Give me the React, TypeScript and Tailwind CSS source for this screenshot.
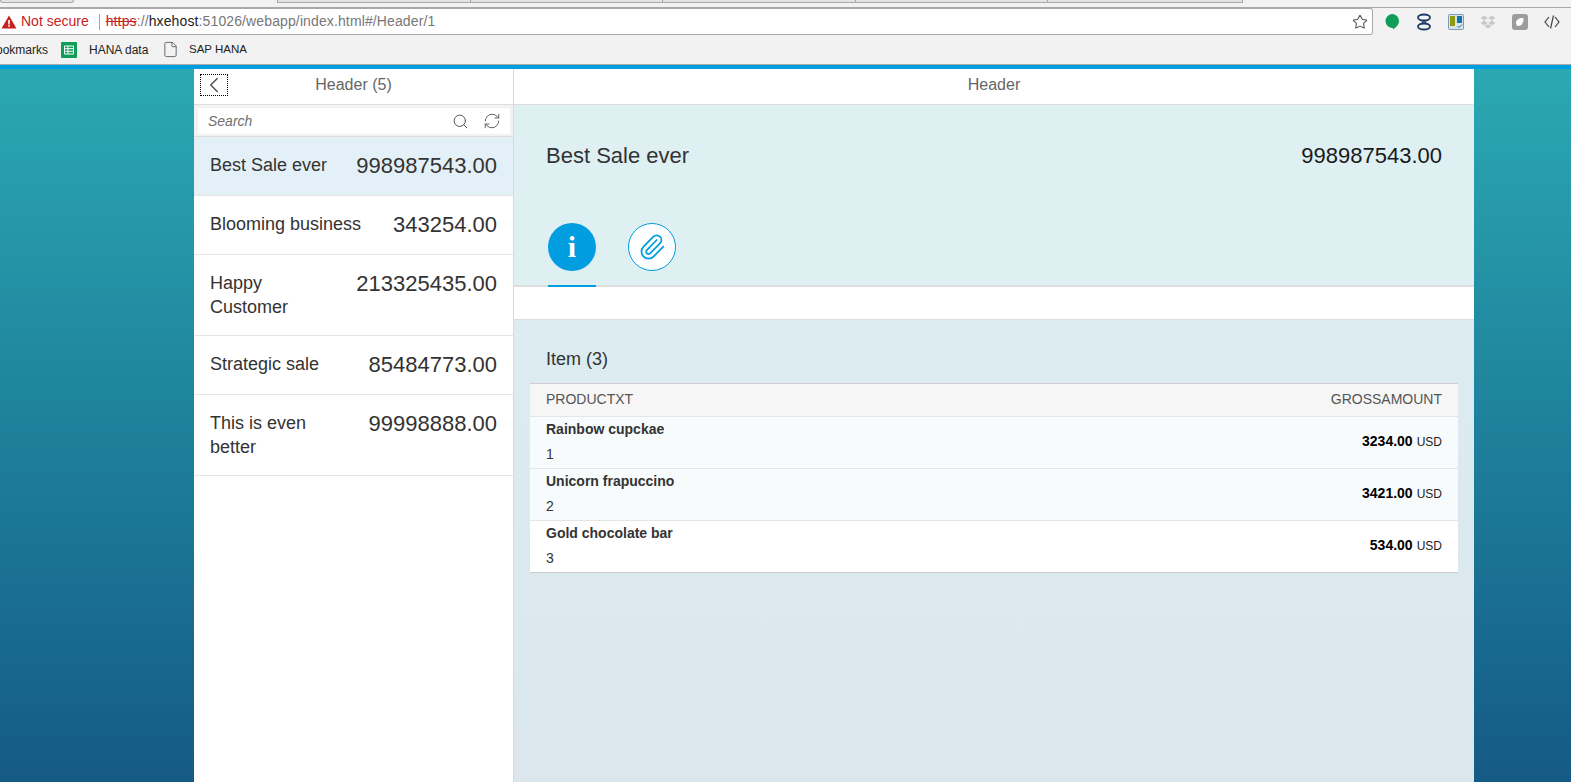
import { ChevronLeft, Search, RefreshCw, Star, Paperclip, File } from 'lucide-react'

const leads = [
  { name: 'Best Sale ever', amount: '998987543.00', h: 'h-[59px]', w: 'max-w-[160px]', selected: true },
  { name: 'Blooming business', amount: '343254.00', h: 'h-[59px]', w: 'max-w-[160px]' },
  { name: 'Happy Customer', amount: '213325435.00', h: 'h-[81px]', w: 'max-w-[120px]' },
  { name: 'Strategic sale', amount: '85484773.00', h: 'h-[59px]', w: 'max-w-[160px]' },
  { name: 'This is even better', amount: '99998888.00', h: 'h-[81px]', w: 'max-w-[120px]' },
]

const items = [
  { name: 'Rainbow cupckae', id: '1', amount: '3234.00', row: 'bg-[#f7fbfc] border-[#e5e5e5]' },
  { name: 'Unicorn frapuccino', id: '2', amount: '3421.00', row: 'bg-[#f7fbfc] border-[#e5e5e5]' },
  { name: 'Gold chocolate bar', id: '3', amount: '534.00', row: 'bg-white border-[#cccccc]' },
]

function ChromeTabs() {
  return (
    <div className="flex h-[8px] border-b border-[#a8a8a8] bg-[#f2f2f2]">
      <div className="h-[3px] w-[74px] rounded-b-sm border border-t-0 border-[#a8a8a8] bg-[#e4e4e4]" />
      <div className="ml-[203px] h-[3px] w-[194px] border border-t-0 border-[#a8a8a8] bg-[#e4e4e4]" />
      <div className="h-[3px] w-[192px] border border-l-0 border-t-0 border-[#a8a8a8] bg-[#e4e4e4]" />
      <div className="h-[3px] w-[193px] border border-l-0 border-t-0 border-[#a8a8a8] bg-[#e4e4e4]" />
      <div className="h-[3px] w-[192px] border border-l-0 border-t-0 border-[#a8a8a8] bg-[#e4e4e4]" />
      <div className="h-[3px] w-[195px] border border-l-0 border-t-0 border-[#a8a8a8] bg-[#e4e4e4]" />
    </div>
  )
}

function Extensions() {
  return (
    <div className="ml-[11px] flex items-center gap-[16px]">
      <svg width="16" height="18" viewBox="0 0 16 18">
        <path d="M8 1a7 7 0 0 1 7 7c0 4-3.5 6.5-6 8.5V15A7 7 0 0 1 8 1z" fill="#0f9d58" />
      </svg>
      <svg width="16" height="18" viewBox="0 0 16 18" fill="none" stroke="#1d3c66" strokeWidth="1.8">
        <ellipse cx="8" cy="4.5" rx="6" ry="3" />
        <ellipse cx="8" cy="13.5" rx="6" ry="3" />
        <path d="M4 7l8 4M12 7l-8 4" strokeWidth="1" />
      </svg>
      <svg width="16" height="16" viewBox="0 0 16 16">
        <rect x="0.5" y="0.5" width="15" height="15" rx="1" fill="#dbe3ea" stroke="#7d99b3" />
        <rect x="2" y="2" width="5" height="10" fill="#8f9a0e" />
        <rect x="9" y="2" width="5" height="7" fill="#0f76ad" />
        <path d="M9.5 12l1.5 1.5 3-3" fill="none" stroke="#0f76ad" />
      </svg>
      <svg width="16" height="16" viewBox="0 0 16 16" fill="#c9c9c9">
        <path d="M4 1.5 8 4 4 6.5 0.5 4zM12 1.5 15.5 4 12 6.5 8 4zM4 6.5 8 9l-4 2.5L0.5 9zM12 6.5 15.5 9 12 11.5 8 9zM4.5 12.2 8 10l3.5 2.2L8 14.5z" />
      </svg>
      <svg width="16" height="16" viewBox="0 0 16 16">
        <rect width="16" height="16" rx="3" fill="#9c9c9c" />
        <path d="M4 9c0-3 3-5 6-5 2 0 2 2 1 4-1 3-3 4-5 4-1 0-2-1-2-3z" fill="#fff" />
      </svg>
      <svg width="16" height="16" viewBox="0 0 16 16" fill="none" stroke="#444" strokeWidth="1.2">
        <path d="M5 3 1 8l4 5M11 3l4 5-4 5M9.5 1.5l-3 13" />
      </svg>
    </div>
  )
}

function BrowserBar() {
  return (
    <div className="bg-[#f2f2f2]">
      <ChromeTabs />
      <div className="flex h-[27px] items-center">
        <div className="flex h-[27px] w-[1373px] items-center rounded-r-[3px] border border-l-0 border-[#a9a9a9] bg-white">
          <svg width="16" height="14" viewBox="0 0 16 14" className="ml-px">
            <path d="M8 0.5 15.5 13.5H0.5z" fill="#c5221f" />
            <rect x="7.2" y="5" width="1.6" height="4.5" fill="#fff" />
            <rect x="7.2" y="10.2" width="1.6" height="1.6" fill="#fff" />
          </svg>
          <span className="ml-[4px] text-[14px] text-[#c5221f]">Not secure</span>
          <span className="ml-[10px] mr-[6px] h-[16px] w-px bg-[#a9a9a9]" />
          <span className="flex-1 text-[14px] tracking-[0.12px] text-[#777]">
            <span className="text-[#c5221f] line-through">https</span>
            <span>://</span>
            <span className="text-[#222]">hxehost</span>
            <span>:51026/webapp/index.html#/Header/1</span>
          </span>
          <Star size={16} className="mr-[4px] text-[#555]" strokeWidth={1.6} />
        </div>
        <Extensions />
      </div>
      <div className="flex h-[29px] items-center overflow-hidden text-[12px] text-[#222]">
        <span className="ml-[-12px] w-[73px] shrink-0">Bookmarks</span>
        <svg width="16" height="16" viewBox="0 0 16 16" className="mr-[12px]">
          <rect width="16" height="16" rx="1" fill="#0f9d58" />
          <path d="M3.5 4h9v8h-9zM3.5 6.7h9M3.5 9.3h9M7 4v8" fill="none" stroke="#fff" />
        </svg>
        <span className="w-[73px]">HANA data</span>
        <File size={17} strokeWidth={1.2} className="mr-[10px] text-[#555]" />
        <span className="text-[11.5px]">SAP HANA</span>
      </div>
      <div className="h-px bg-[#a9a9a9]" />
      <div className="h-[4px] bg-[#009de0]" />
    </div>
  )
}

function MasterList() {
  return (
    <div className="flex w-[320px] flex-col border-r border-[#d9d9d9] bg-white">
      <div className="relative flex h-[36px] items-center justify-center border-b border-[#dddddd] pb-[3px] text-[16px] text-[#666666]">
        <div className="absolute left-[6px] top-[5px] flex h-[22px] w-[28px] items-center justify-center border border-dotted border-black">
          <ChevronLeft size={26} strokeWidth={1.4} className="text-[#555]" />
        </div>
        Header (5)
      </div>
      <div className="border-b border-[#dddddd] bg-[#f2f2f2] pb-[2px] pl-[4px] pr-[3px] pt-[3px]">
        <div className="flex h-[26px] items-center bg-white pl-[10px] pr-[9px]">
          <span className="flex-1 text-[14px] italic text-[#707070]">Search</span>
          <Search size={17} strokeWidth={1.4} className="mr-[14px] text-[#555]" />
          <RefreshCw size={18} strokeWidth={1.2} className="text-[#555]" />
        </div>
      </div>
      {leads.map((lead) => (
        <div
          key={lead.name}
          className={`flex ${lead.h} shrink-0 items-start justify-between border-b border-[#e5e5e5] px-[16px] pt-[16px] ${lead.selected ? 'bg-[#e3f0f8]' : 'bg-white'}`}
        >
          <span className={`${lead.w} text-[18px] leading-[24px] text-[#333333]`}>{lead.name}</span>
          <span className="text-[22px] leading-[26px] text-[#333333]">{lead.amount}</span>
        </div>
      ))}
    </div>
  )
}

function DetailHeader() {
  return (
    <div className="relative bg-[#dff0f3]">
      <div className="flex items-center justify-between pl-[32px] pr-[32px] pt-[38px]">
        <span className="text-[22px] leading-[26px] text-[#333333]">Best Sale ever</span>
        <span className="text-[22px] leading-[26px] text-[#1a1a1a]">998987543.00</span>
      </div>
      <div className="mt-[54px] flex h-[62px] gap-[32px] pl-[34px]">
        <div className="flex h-[48px] w-[48px] items-center justify-center rounded-full bg-[#009de0]">
          <span className="text-[30px] font-bold leading-none text-white [font-family:'Liberation_Serif',serif]">i</span>
        </div>
        <div className="flex h-[48px] w-[48px] items-center justify-center rounded-full border border-[#009de0] bg-white">
          <Paperclip size={28} strokeWidth={1.5} className="text-[#009de0]" />
        </div>
      </div>
      <div className="h-[2px] bg-[#dddddd]" />
      {/* selected tab marker sits on the grey rule */}
      <div className="absolute bottom-0 left-[34px] h-[2px] w-[48px] bg-[#009de0]" />
    </div>
  )
}

function ItemTable() {
  return (
    <div className="flex-1 bg-gradient-to-b from-[#dcecf0] to-[#dbe7ed] px-[16px]">
      <div className="pl-[16px] pt-[28px] text-[18px] leading-[22px] text-[#333333]">Item (3)</div>
      <div className="mt-[13px] bg-white">
        <div className="flex h-[34px] items-center justify-between border-y border-[#cfcfcf] border-b-[#e5e5e5] bg-[#f6f6f6] px-[16px] pb-[2px] text-[14px] text-[#555555]">
          <span>PRODUCTXT</span>
          <span>GROSSAMOUNT</span>
        </div>
        {items.map((item) => (
          <div
            key={item.id}
            className={`flex h-[52px] items-center justify-between border-b px-[16px] pb-[2px] ${item.row}`}
          >
            <div className="flex flex-col">
              <span className="text-[14px] font-bold leading-[16px] text-[#333333]">{item.name}</span>
              <span className="mt-[9px] text-[14px] leading-[16px] text-[#333333]">{item.id}</span>
            </div>
            <div className="flex items-baseline gap-[4px] text-black">
              <span className="text-[14px] font-bold">{item.amount}</span>
              <span className="text-[12px] text-[#222]">USD</span>
            </div>
          </div>
        ))}
      </div>
    </div>
  )
}

export default function App() {
  return (
    <div className="flex h-[782px] flex-col overflow-hidden font-['Liberation_Sans',Arial,sans-serif]">
      <BrowserBar />
      <div className="min-h-0 flex-1 bg-gradient-to-b from-[#2ba9b2] to-[#155a85] pl-[194px] pr-[97px]">
        <div className="flex h-full">
          <MasterList />
          <div className="flex flex-1 flex-col bg-white">
            <div className="flex h-[36px] items-center justify-center border-b border-[#dddddd] pb-[3px] text-[16px] text-[#666666]">Header</div>
            <DetailHeader />
            <div className="h-[33px] border-b border-[#dddddd] bg-white" />
            <ItemTable />
          </div>
        </div>
      </div>
    </div>
  )
}
